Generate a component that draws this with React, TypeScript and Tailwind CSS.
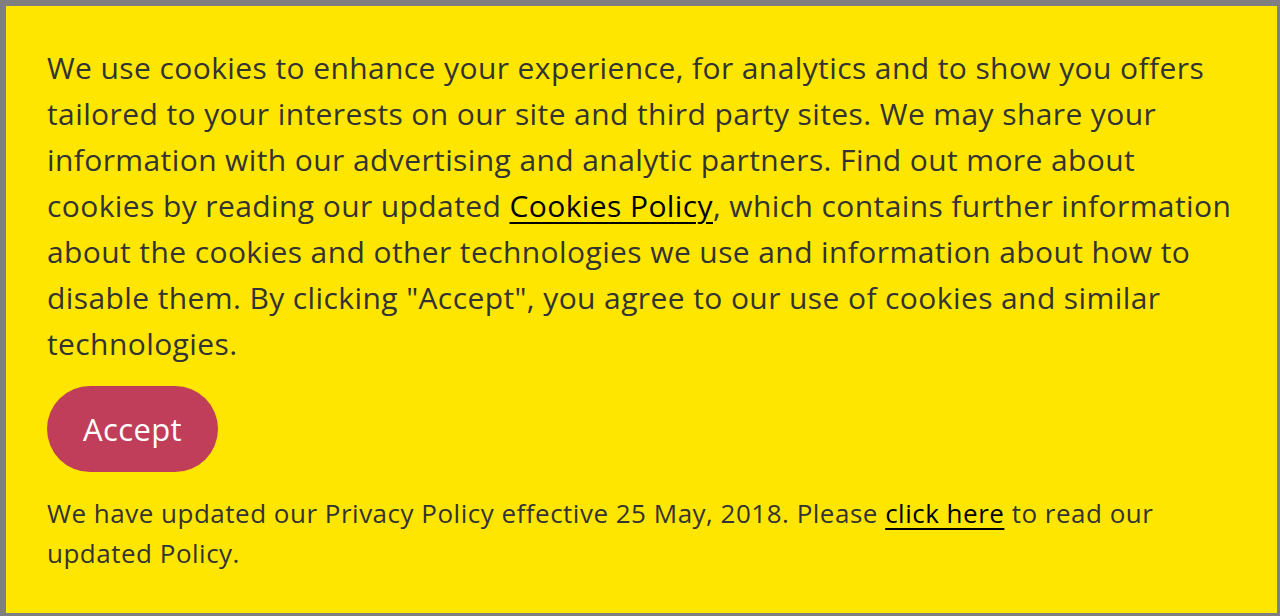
import React from 'react'

const App = () => {
    return (
        <div className="w-[1280px] h-[616px] bg-[#7f7f7f] pt-[6px] pl-[6px] pr-[3px] pb-[3px] font-['Open_Sans',sans-serif]">
            <div className="h-full bg-[#ffe600] pl-[41px] pr-[41px] pt-[39px] text-[#333333] tracking-[0.4px]">
                {/* main cookie notice */}
                <p className="text-[30px] leading-[46px]">
                    We use cookies to enhance your experience, for analytics and to show you offers tailored to your interests on our site and third party sites. We may share your information with our advertising and analytic partners. Find out more about cookies by reading our updated{' '}
                    <a href="#" className="text-black underline decoration-2 underline-offset-[5px]">Cookies Policy</a>, which contains further information about the cookies and other technologies we use and information about how to disable them. By clicking "Accept", you agree to our use of cookies and similar technologies.
                </p>

                <button className="mt-[19px] w-[171px] h-[86px] rounded-full bg-[#c13e5a] text-white text-[31px]">
                    Accept
                </button>

                <p className="mt-[21px] text-[26px] leading-[40px] tracking-[0.5px]">
                    We have updated our Privacy Policy effective 25 May, 2018. Please{' '}
                    <a href="#" className="text-black underline decoration-2 underline-offset-[5px]">click here</a> to read our updated Policy.
                </p>
            </div>
        </div>
    )
}

export default App
